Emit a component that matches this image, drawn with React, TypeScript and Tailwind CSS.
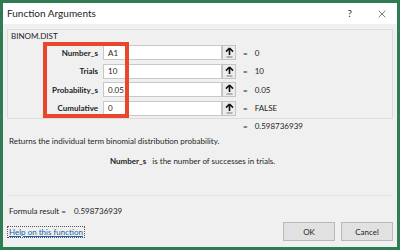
import { X } from 'lucide-react'

const args = [
  { name: 'Number_s', value: 'A1', result: '0' },
  { name: 'Trials', value: '10', result: '10' },
  { name: 'Probability_s', value: '0.05', result: '0.05' },
  { name: 'Cumulative', value: '0', result: 'FALSE' },
]

function CollapseButton() {
  return (
    <div className="flex h-[15px] w-[14px] items-center justify-center border border-[#c4c4c4] bg-[#ececec]">
      <svg width="9" height="11" viewBox="0 0 9 11">
        <path d="M4.5 1 L1 4.6 M4.5 1 L8 4.6 M4.5 1 V8" stroke="#111" strokeWidth="1.6" fill="none" />
        <path d="M1.5 10 H7.5" stroke="#777" strokeWidth="1" />
      </svg>
    </div>
  )
}

export default function App() {
  return (
    <div className="flex h-[250px] w-[400px] flex-col border-[3px] border-[#2f7b52] bg-[#f0f0f0] font-['Lato','Noto_Sans',sans-serif] text-[#1e1e1e]">
      {/* title bar */}
      <div className="flex h-[21px] shrink-0 items-center bg-white pl-[4px] pr-[9px] text-[10px]">
        <span>Function Arguments</span>
        <span className="ml-auto mr-[24px] text-[10px] text-[#333]">?</span>
        <X className="h-[12px] w-[12px] text-[#333]" strokeWidth={1.3} />
      </div>

      <div className="flex flex-1 flex-col px-[4px]">
        {/* argument group */}
        <div className="mt-[5px] h-[90px] border border-[#dcdcdc]">
          <div className="pl-[3px] pt-[1px] text-[8px] leading-[10px]">BINOM.DIST</div>
          <div className="relative mt-[4px] grid grid-cols-[95px_119px_14px_1fr] items-center gap-y-[3.5px]">
            {args.map((a) => (
              <div key={a.name} className="contents">
                <div className="pr-[5px] text-right text-[8px] font-bold">{a.name}</div>
                <div className="flex h-[15px] items-center border border-[#c8c8c8] bg-white px-[4px] text-[8px]">
                  {a.value}
                </div>
                <CollapseButton />
                <div className="flex items-center pl-[7px] text-[8px]">
                  <span className="mr-[7px]">=</span>
                  <span>{a.result}</span>
                </div>
              </div>
            ))}
            {/* highlight annotation */}
            <div className="absolute left-[35px] top-[-3px] h-[76px] w-[86px] border-[4px] border-[#e8472b]" />
          </div>
        </div>

        <div className="mt-[2px] pl-[236px] text-[8px] leading-[10px]">
          <span className="mr-[7px]">=</span>
          <span>0.598736939</span>
        </div>

        <div className="mt-[5px] pl-[2px] text-[8px] leading-[10px]">
          Returns the individual term binomial distribution probability.
        </div>

        <div className="mt-[10px] pl-[103px] text-[8px] leading-[10px]">
          <span className="font-bold">Number_s</span>
          <span className="ml-[6px]">is the number of successes in trials.</span>
        </div>

        <div className="mt-[29px] border-t border-[#e2e2e2]" />

        <div className="mt-[10px] pl-[2px] text-[8px] leading-[10px]">
          <span>Formula result =</span>
          <span className="ml-[8px]">0.598736939</span>
        </div>

        <div className="mt-[6px] flex items-center">
          <span className="border border-dotted border-[#555] px-[1px] text-[8px] leading-[10px] text-[#1a5ea8] underline">
            Help on this function
          </span>
          <div className="ml-auto flex gap-[6px]">
            <div className="flex h-[19px] w-[52px] items-center justify-center border border-[#b9b9b9] bg-[#e1e1e1] text-[8px]">
              OK
            </div>
            <div className="flex h-[19px] w-[52px] items-center justify-center border border-[#b9b9b9] bg-[#e1e1e1] text-[8px]">
              Cancel
            </div>
          </div>
        </div>
      </div>
    </div>
  )
}
